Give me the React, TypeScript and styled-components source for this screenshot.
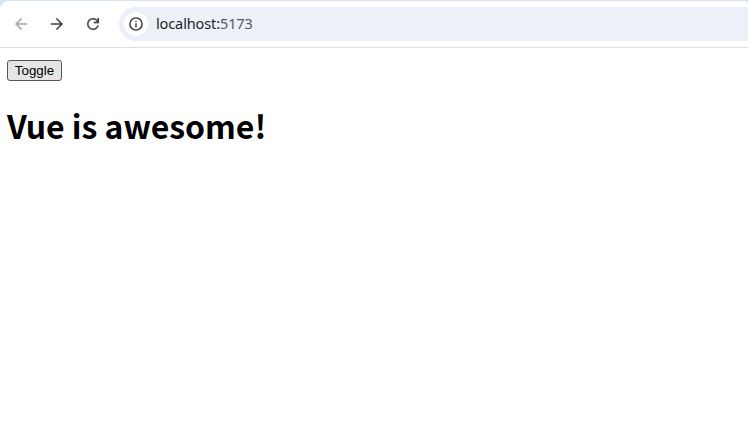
import React, { useState } from "react";
import styled, { createGlobalStyle } from "styled-components";

const GlobalStyle = createGlobalStyle`
  * { box-sizing: border-box; }
  body { margin: 0; background: #fff; overflow: hidden; }
`;

const Window = styled.div`
  height: 424px;
  background: #d7e2f3;
  padding-top: 1px;
  display: flex;
  flex-direction: column;
`;

const Toolbar = styled.header`
  height: 47px;
  flex: none;
  display: flex;
  align-items: center;
  padding: 0 0 1px 12px;
  background: #fff;
  border-bottom: 1px solid #dedfe1;
  border-radius: 8px 4px 0 0;
`;

const NavButton = styled.button<{ $muted?: boolean }>`
  width: 18px;
  height: 18px;
  margin-right: 18px;
  padding: 0;
  border: 0;
  background: none;
  color: ${(p) => (p.$muted ? "#a9a9a9" : "#474747")};
  svg { display: block; fill: currentColor; stroke: currentColor; stroke-width: 0.2; }
`;

const AddressBar = styled.div`
  flex: 1;
  height: 34px;
  margin-left: -1px;
  display: flex;
  align-items: center;
  padding-left: 5px;
  border-radius: 17px 0 0 17px;
  background: #ebf0f9;
`;

const SiteInfo = styled.span`
  width: 24px;
  height: 24px;
  display: grid;
  place-items: center;
  border-radius: 50%;
  background: #fff;
`;

const Url = styled.span`
  margin: 0 0 2px 8px;
  font: 14.5px/20px "Noto Sans", "Open Sans", sans-serif;
  letter-spacing: -0.12px;
  color: #1f1f1f;
`;

const Port = styled.span`
  color: #55585d;
`;

const Page = styled.main`
  flex: 1;
  padding: 12px 7px;
  background: #fff;
`;

const ToggleButton = styled.button`
  display: block;
  width: 55px;
  height: 21px;
  padding: 0;
  border: 1px solid #555;
  border-radius: 3px;
  background: #e5e5e5;
  color: #000;
  font: 13.333px/19px "Liberation Sans", Arial, sans-serif;
`;

const Title = styled.h1`
  margin: 21px 0 0;
  font: 700 32px/46px "Noto Sans CJK SC", sans-serif;
  letter-spacing: -0.04px;
  color: #000;
  white-space: nowrap;
`;

const Icon = ({ d }: { d: string }) => (
  <svg width="18" height="18" viewBox="0 0 24 24"><path d={d} /></svg>
);

export default function App() {
  const [awesome, setAwesome] = useState(true);
  return (
    <Window>
      <GlobalStyle />
      <Toolbar>
        <NavButton $muted aria-label="Back">
          <Icon d="M20 11H7.83l5.59-5.59L12 4l-8 8 8 8 1.41-1.41L7.83 13H20z" />
        </NavButton>
        <NavButton aria-label="Forward">
          <Icon d="M4 11h12.17l-5.59-5.59L12 4l8 8-8 8-1.41-1.41L16.17 13H4z" />
        </NavButton>
        <NavButton aria-label="Reload">
          <Icon d="M12 20q-3.35 0-5.675-2.325T4 12t2.325-5.675T12 4q1.725 0 3.3.713T18 6.75V4h2v7h-7V9h4.2q-.8-1.4-2.188-2.2T12 6Q9.500 6 7.750 7.750T6 12t1.750 4.250T12 18q1.925 0 3.475-1.100T17.650 14h2.100q-.7 2.650-2.850 4.325T12 20z" />
        </NavButton>
        <AddressBar>
          <SiteInfo>
            <svg width="14" height="14" viewBox="0 0 14 14" fill="none" stroke="#303134" strokeWidth="1.4">
              <circle cx="7" cy="7" r="6.1" />
              <path d="M7 6.2v4M7 3.7v1.4" />
            </svg>
          </SiteInfo>
          <Url>localhost:<Port>5173</Port></Url>
        </AddressBar>
      </Toolbar>
      <Page>
        <ToggleButton onClick={() => setAwesome(!awesome)}>Toggle</ToggleButton>
        <Title>{awesome ? "Vue is awesome!" : "Oh no 😢"}</Title>
      </Page>
    </Window>
  );
}
